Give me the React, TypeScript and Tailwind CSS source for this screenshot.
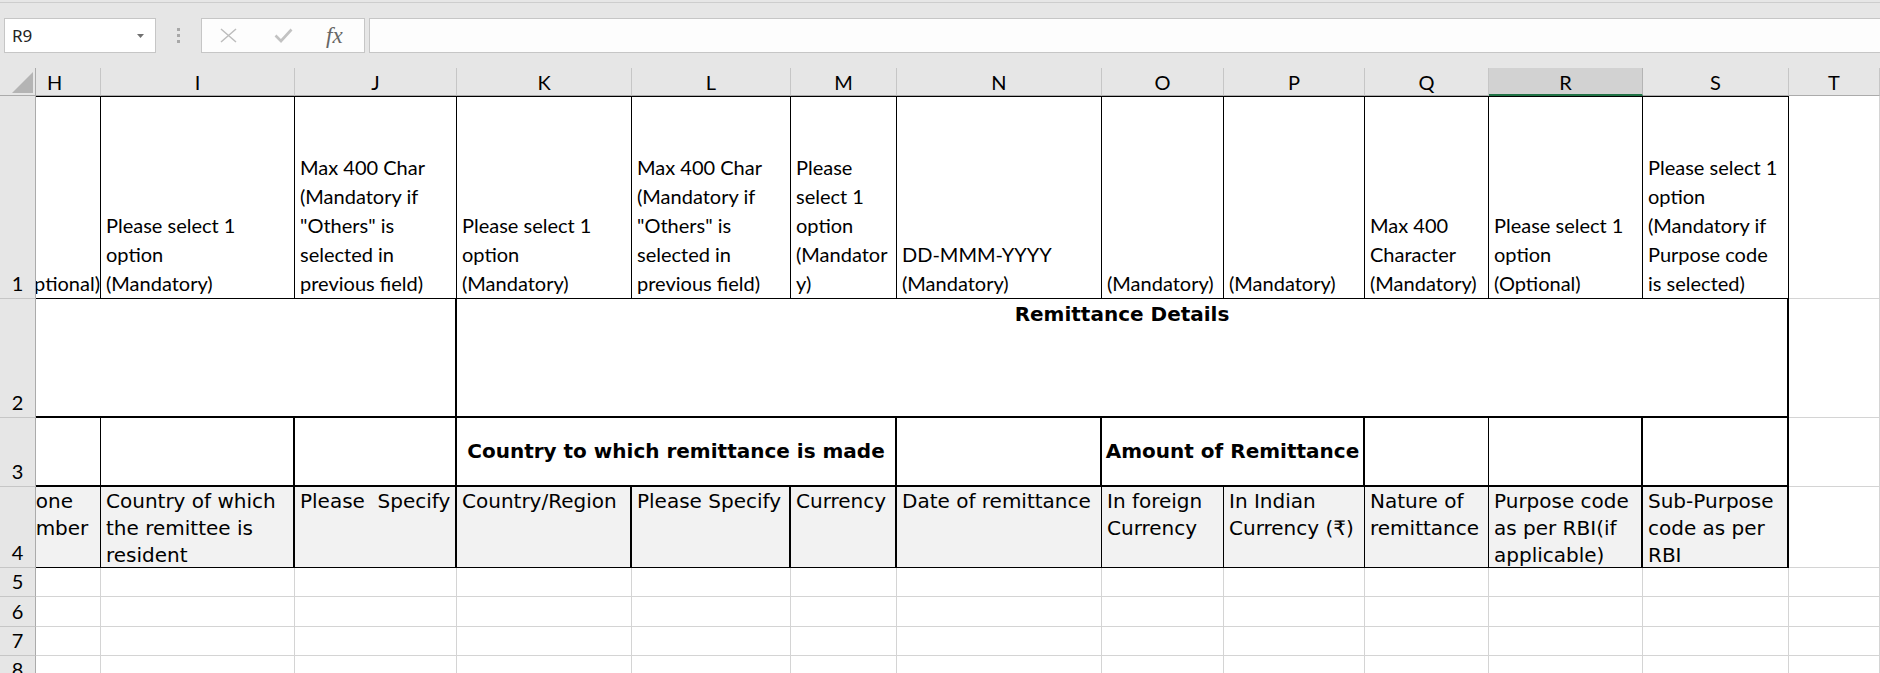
import type { ReactNode } from "react";

const CAL = "font-[family-name:Lato,sans-serif] text-[20px] leading-[29px] text-black";
const VER = "font-[family-name:'DejaVu_Sans','Noto_Sans',sans-serif] text-[20px] leading-[27px] text-black";
const GRID = "border-r border-b border-[#d4d4d4] bg-white";

const letters = ["I", "J", "K", "L", "M", "N", "O", "P", "Q", "R", "S", "T"];

const notes: string[][] = [
  ["Please select 1", "option", "(Mandatory)"],
  ["Max 400 Char", "(Mandatory if", "\"Others\" is", "selected in", "previous field)"],
  ["Please select 1", "option", "(Mandatory)"],
  ["Max 400 Char", "(Mandatory if", "\"Others\" is", "selected in", "previous field)"],
  ["Please", "select 1", "option", "(Mandator", "y)"],
  ["DD-MMM-YYYY", "(Mandatory)"],
  ["(Mandatory)"],
  ["(Mandatory)"],
  ["Max 400", "Character", "(Mandatory)"],
  ["Please select 1", "option", "(Optional)"],
  ["Please select 1", "option", "(Mandatory if", "Purpose code", "is selected)"],
];

const fields: { lines: string[]; edge: string }[] = [
  { lines: ["Country of which", "the remittee is", "resident"], edge: "border-r-2" },
  { lines: ["Please  Specify"], edge: "border-r-2" },
  { lines: ["Country/Region"], edge: "border-r-2" },
  { lines: ["Please Specify"], edge: "border-r-2" },
  { lines: ["Currency"], edge: "border-r-2" },
  { lines: ["Date of remittance"], edge: "border-r" },
  { lines: ["In foreign", "Currency"], edge: "border-r" },
  { lines: ["In Indian", "Currency (₹)"], edge: "border-r" },
  { lines: ["Nature of", "remittance"], edge: "border-r" },
  { lines: ["Purpose code", "as per RBI(if", "applicable)"], edge: "border-r-2" },
  { lines: ["Sub-Purpose", "code as per", "RBI"], edge: "border-r-2" },
];

// row 3 cells after H: span + right edge + optional bold caption
const groups: { span: string; edge: string; text?: string }[] = [
  { span: "", edge: "border-r-2" },
  { span: "", edge: "border-r-2" },
  { span: "col-span-3", edge: "border-r-2", text: "Country to which remittance is made" },
  { span: "", edge: "border-r-2" },
  { span: "col-span-2", edge: "border-r-2", text: "Amount of Remittance" },
  { span: "", edge: "border-r" },
  { span: "", edge: "border-r-2" },
  { span: "", edge: "border-r-2" },
];

function Lines({ lines }: { lines: string[] }) {
  return (
    <>
      {lines.map((line, i) => (
        <div key={i} className="whitespace-pre">{line}</div>
      ))}
    </>
  );
}

function RowHead({ children }: { children: ReactNode }) {
  return (
    <div className={`flex items-end justify-center border-r border-b border-r-[#ababab] border-b-[#c6c6c6] bg-[#e6e6e6] ${CAL} text-[#222]`}>
      {children}
    </div>
  );
}

export default function App() {
  return (
    <div className="h-[673px] w-[1880px] overflow-hidden bg-[#e6e6e6]">
      <div className="mt-[2px] h-px bg-[#cdcdcd]" />

      <div className="mt-[15px] flex h-[35px] pl-[4px]">
        <div className="relative flex w-[152px] items-center border border-[#c6c6c6] bg-white pl-[7px] font-[family-name:'Noto_Sans',sans-serif] text-[17px] text-[#222]">
          R9
          <svg className="absolute right-[11px] top-[15px]" width="7" height="4" viewBox="0 0 7 4">
            <path d="M0 0h7L3.5 4z" fill="#707070" />
          </svg>
        </div>
        <div className="flex w-[45px] flex-col items-center justify-center gap-[3px]">
          <span className="h-[3px] w-[3px] bg-[#a8a8a8]" />
          <span className="h-[3px] w-[3px] bg-[#a8a8a8]" />
          <span className="h-[3px] w-[3px] bg-[#a8a8a8]" />
        </div>
        <div className="flex w-[164px] items-center border border-[#c6c6c6] bg-[#fdfdfd] pl-[18px]">
          <svg width="17" height="15" viewBox="0 0 17 15">
            <path d="M1 1l15 13M16 1L1 14" stroke="#bdbdbd" strokeWidth="1.5" fill="none" />
          </svg>
          <svg className="ml-[37px]" width="19" height="15" viewBox="0 0 19 15">
            <path d="M1.5 7.5l5.5 5.5L17.5 1.5" stroke="#c2c2c2" strokeWidth="2.6" fill="none" />
          </svg>
          <span className="ml-[33px] font-[family-name:'Liberation_Serif',serif] text-[23px] italic leading-none text-[#666]">fx</span>
        </div>
        <div className="ml-[4px] flex-1 border border-r-0 border-[#c6c6c6] bg-[#fdfdfd]" />
      </div>

      <div className="mt-[15px] grid grid-cols-[36px_65px_194px_162px_175px_159px_106px_205px_122px_141px_124px_154px_146px_1fr] grid-rows-[28px_203px_119px_69px_81px_29px_30px_29px_29px]">
        {/* column headers */}
        <div className="flex items-end justify-end border-r border-b border-r-[#ababab] border-b-[#ababab] bg-[#e6e6e6] pr-[2px] pb-[2px]">
          <svg width="21" height="21" viewBox="0 0 21 21">
            <path d="M21 0v21H0z" fill="#b4b4b4" />
          </svg>
        </div>
        <div className={`flex items-center border-r border-b border-r-[#c6c6c6] border-b-[#ababab] bg-[#e6e6e6] pl-[11px] pt-[2px] ${CAL} text-[#222]`}>H</div>
        {letters.map(l =>
          l === "R" ? (
            <div key={l} className={`flex items-center justify-center border-r border-b-2 border-r-[#b4b4b4] border-b-[#217346] bg-[#d2d2d2] pt-[2px] ${CAL} text-[#217346]`}>{l}</div>
          ) : (
            <div key={l} className={`flex items-center justify-center border-r border-b border-r-[#c6c6c6] border-b-[#ababab] bg-[#e6e6e6] pt-[2px] ${CAL} text-[#222]`}>{l}</div>
          )
        )}

        {/* row 1: input notes */}
        <RowHead>1</RowHead>
        <div className={`overflow-hidden border-t border-r border-b border-black bg-white ${CAL}`}>
          <div className="-ml-[27px] flex h-full w-[92px] items-end justify-end whitespace-nowrap pr-[1px]">(Optional)</div>
        </div>
        {notes.map((lines, i) => (
          <div key={i} className={`flex flex-col justify-end overflow-hidden border-t border-r border-b border-black bg-white pl-[5px] ${CAL}`}>
            <Lines lines={lines} />
          </div>
        ))}
        <div className={GRID} />

        {/* row 2: section title */}
        <RowHead>2</RowHead>
        <div className="col-span-3 border-r-2 border-b-2 border-black bg-white" />
        <div className={`col-span-9 border-r-2 border-b-2 border-black bg-white pt-[2px] text-center font-bold ${VER}`}>Remittance Details</div>
        <div className={GRID} />

        {/* row 3: groups */}
        <RowHead>3</RowHead>
        <div className="border-r border-b-2 border-black bg-white" />
        {groups.map((g, i) => (
          <div key={i} className={`${g.span} ${g.edge} flex items-center justify-center whitespace-nowrap border-b-2 border-black bg-white font-bold ${VER}`}>
            {g.text}
          </div>
        ))}
        <div className={GRID} />

        {/* row 4: field names */}
        <RowHead>4</RowHead>
        <div className={`overflow-hidden border-r border-b border-black bg-[#f2f2f2] pt-[1px] ${VER}`}>
          <div className="-ml-[30px] w-[97px] whitespace-pre pl-[5px]">Phone</div>
          <div className="-ml-[33px] w-[97px] whitespace-pre pl-[5px]">Number</div>
        </div>
        {fields.map((f, i) => (
          <div key={i} className={`${f.edge} border-b border-black bg-[#f2f2f2] pt-[1px] pl-[5px] ${VER}`}>
            <Lines lines={f.lines} />
          </div>
        ))}
        <div className={GRID} />

        {/* empty rows */}
        {[5, 6, 7, 8].map(n => (
          <div key={n} className="contents">
            <RowHead>{n}</RowHead>
            {Array.from({ length: 13 }).map((_, i) => (
              <div key={i} className={GRID} />
            ))}
          </div>
        ))}
      </div>
    </div>
  );
}
